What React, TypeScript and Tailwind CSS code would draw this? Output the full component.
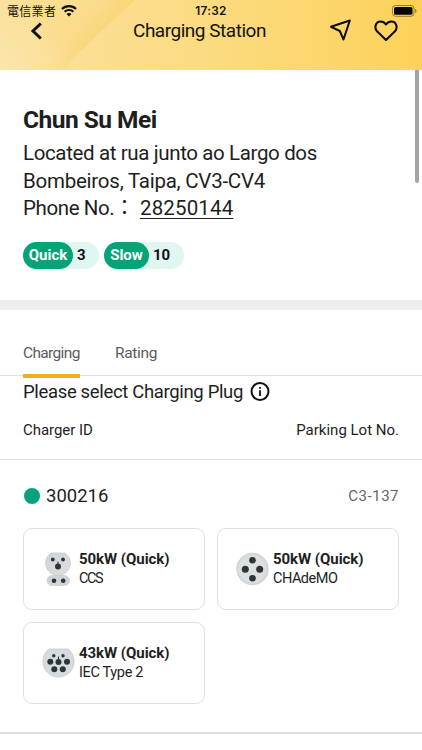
import type { ReactNode } from "react";

type Plug = {
  power: string;
  type: string;
  icon: ReactNode;
  typeClass: string;
};

function CcsIcon() {
  return (
    <svg width="27" height="34" viewBox="0 0 27 34">
      <defs>
        <linearGradient id="ccs" x1="0" y1="0" x2="1" y2="1">
          <stop offset="0" stopColor="#ced2d5" />
          <stop offset="1" stopColor="#dfe1e3" />
        </linearGradient>
      </defs>
      <rect x="2" y="23.5" width="22.5" height="10" rx="5" fill="#d0d4d7" stroke="#c6cacd" strokeWidth=".6" />
      <path d="M6 1H20A12.300 12.300 0 1 1 6 1Z" fill="url(#ccs)" stroke="#c6cacd" strokeWidth=".8" />
      <g fill="#2c3539">
        <circle cx="7.800" cy="7.500" r="1.900" />
        <circle cx="18" cy="7.500" r="1.900" />
        <circle cx="13" cy="14.500" r="3" />
        <path d="M12.500 9.500h1v4h-1z" />
        <circle cx="9" cy="28.700" r="2.300" />
        <circle cx="18.200" cy="28.700" r="2.300" />
      </g>
    </svg>
  );
}

function ChademoIcon() {
  return (
    <svg width="33" height="34" viewBox="0 0 33 34">
      <circle cx="16.500" cy="17" r="15.800" fill="#d8dbdd" stroke="#c6c9cc" strokeWidth=".8" />
      <circle cx="16.500" cy="17" r="13.500" fill="#dddfe1" />
      <g fill="#2c3539">
        <circle cx="16.500" cy="8.300" r="3.300" />
        <circle cx="9.300" cy="17.200" r="3.500" />
        <circle cx="23.700" cy="17.200" r="3.500" />
        <circle cx="16.500" cy="26.300" r="3.300" />
      </g>
    </svg>
  );
}

function Type2Icon() {
  return (
    <svg width="33" height="30" viewBox="0 0 33 30">
      <path d="M7 1H26A15.600 15.600 0 1 1 7 1Z" fill="#d8dbdd" stroke="#c6c9cc" strokeWidth=".8" />
      <g fill="#2c3539">
        <circle cx="11.800" cy="7.700" r="1.700" />
        <circle cx="21" cy="7.700" r="1.700" />
        <circle cx="8.300" cy="13.800" r="3" />
        <circle cx="16.500" cy="14" r="3" />
        <circle cx="25" cy="13.800" r="3" />
        <path d="M16 8.500h1v4h-1z" />
        <circle cx="12.300" cy="21.300" r="3" />
        <circle cx="20.800" cy="21.300" r="3" />
      </g>
    </svg>
  );
}

const plugs: Plug[] = [
  { power: "50kW (Quick)", type: "CCS", icon: <CcsIcon />, typeClass: "tracking-[-1.4px]" },
  { power: "50kW (Quick)", type: "CHAdeMO", icon: <ChademoIcon />, typeClass: "tracking-[-0.5px]" },
  { power: "43kW (Quick)", type: "IEC Type 2", icon: <Type2Icon />, typeClass: "tracking-[-0.35px]" },
];

function Header() {
  return (
    <header className="relative h-[70px] shrink-0 overflow-hidden bg-linear-to-r from-[#fce1a0] via-[#fcdb80] to-[#fdd258] text-[#16130a]">
      <svg className="absolute inset-0" width="422" height="70" viewBox="0 0 422 70">
        <defs>
          <linearGradient id="fold" gradientUnits="userSpaceOnUse" x1="15" y1="-15" x2="100" y2="60">
            <stop offset="0" stopColor="#fbdf98" />
            <stop offset=".65" stopColor="#fbdc8c" />
            <stop offset="1" stopColor="#f9d26f" />
          </linearGradient>
          <linearGradient id="corner" gradientUnits="userSpaceOnUse" x1="0" y1="70" x2="50" y2="20">
            <stop offset="0" stopColor="#fae6ae" />
            <stop offset="1" stopColor="#fae6ae" stopOpacity="0" />
          </linearGradient>
          <linearGradient id="sheen" gradientUnits="userSpaceOnUse" x1="230" y1="80" x2="250" y2="30">
            <stop offset="0" stopColor="#fde08e" stopOpacity="0" />
            <stop offset="1" stopColor="#fbd264" stopOpacity=".35" />
          </linearGradient>
        </defs>
        <path d="M0 0H135Q97 34 62 70H0Z" fill="url(#fold)" />
        <path d="M0 0H135Q97 34 62 70H0Z" fill="url(#corner)" />
        <path d="M225 46Q262 59 290 70H185Z" fill="url(#sheen)" />
      </svg>
      <div className="relative flex h-[22px] items-center justify-between pl-[7px] pr-[5px]">
        <div className="flex w-[150px] items-center gap-[5px] font-['Noto_Sans_CJK_TC',sans-serif] text-[12px] leading-none tracking-[0.3px]">
          電信業者
          <svg width="16" height="12" viewBox="0 0 16 12" fill="#111">
            <path d="M8 0C11.100 0 13.900 1.200 15.800 3.200L14.300 4.800A9 9 0 0 0 1.700 4.800L.2 3.200A11 11 0 0 1 8 0Z" />
            <path d="M8 4C10 4 11.800 4.800 13.100 6L11.600 7.500A5.200 5.200 0 0 0 4.400 7.500L2.900 6A7.200 7.200 0 0 1 8 4Z" />
            <path d="M8 8C9 8 9.800 8.300 10.500 8.900L8 11.500L5.500 8.900A3.600 3.600 0 0 1 8 8Z" />
          </svg>
        </div>
        <span className="relative -left-px pt-px font-[Inter,sans-serif] text-[11.8px] font-semibold leading-none tracking-[0.3px]">17:32</span>
        <div className="flex w-[150px] justify-end">
          <svg width="25" height="12" viewBox="0 0 25 12">
            <rect x=".5" y=".5" width="21.500" height="10.800" rx="3" fill="none" stroke="#77601f" strokeOpacity=".75" />
            <rect x="2" y="2" width="18.500" height="7.800" rx="1.600" fill="#050505" />
            <path d="M23.300 4v4q1.200-.6 1.200-2t-1.200-2Z" fill="#77601f" />
          </svg>
        </div>
      </div>
      <div className="relative -mt-px flex h-[20px] items-center pl-[30px] pr-[24px]">
        <svg width="13" height="18" viewBox="0 0 13 18" fill="none" stroke="#111" strokeWidth="3">
          <path d="M10.800 1.500L3 9L10.800 16.500" />
        </svg>
        <h1 className="ml-[90px] w-[196px] whitespace-nowrap text-[19px] leading-5 tracking-[-0.48px]">Charging Station</h1>
        <svg width="22" height="22" viewBox="0 0 22 22" fill="none" stroke="#0c0b07" strokeWidth="2" strokeLinejoin="round" className="relative -top-px shrink-0">
          <path d="M2 7.800L20.800 1.500L14.500 20.500L10.800 12Z" />
        </svg>
        <svg width="24" height="22" viewBox="0 0 24 22" fill="none" stroke="#0c0b07" strokeWidth="2.100" strokeLinejoin="round" className="ml-[23px] shrink-0">
          <path d="M12 20L3 11.200C0 8 1.500 1.500 6.500 1.500C9 1.500 10.800 2.700 12 4.500C13.200 2.700 15 1.500 17.500 1.500C22.500 1.500 24 8 21 11.200Z" />
        </svg>
      </div>
    </header>
  );
}

function Badge({ label, count, className, labelClass }: { label: string; count: number; className: string; labelClass: string }) {
  return (
    <div className={`flex h-[27px] items-center rounded-full bg-[#e0f6f0] ${className}`}>
      <span className={`flex h-full items-center justify-center rounded-full bg-[#05a377] pt-px text-[15px] font-bold text-white ${labelClass}`}>
        {label}
      </span>
      <span className="ml-[4px] pt-px text-[15px] font-bold text-[#111]">{count}</span>
    </div>
  );
}

function PlugCard({ plug }: { plug: Plug }) {
  return (
    <div className="flex h-[82px] items-center rounded-[9px] border border-[#dfdfdf] pl-[18px]">
      <div className="flex w-[33px] shrink-0 justify-center">{plug.icon}</div>
      <div className="ml-[4px] whitespace-nowrap">
        <div className="text-[15px] font-bold leading-[20px] tracking-[-0.05px]">{plug.power}</div>
        <div className={`text-[14.5px] leading-[20px] ${plug.typeClass}`}>{plug.type}</div>
      </div>
    </div>
  );
}

export default function App() {
  return (
    <div className="flex h-[750px] w-[422px] flex-col overflow-hidden bg-white font-[Roboto,sans-serif] text-[#1e1e1e]">
      <Header />
      <main className="relative flex-1">
        <div className="absolute right-[3px] top-0 h-[113px] w-[4px] rounded-b-full bg-[#a3a3a3]" />
        <section className="h-[230px] px-[23px] pt-[35px]">
          <h2 className="text-[24.5px] font-bold leading-[30px] tracking-[-0.52px]">Chun Su Mei</h2>
          <div className="mt-[5px] whitespace-nowrap text-[20.5px] leading-[27.5px]">
            <p className="tracking-[-0.37px]">Located at rua junto ao Largo dos</p>
            <p className="tracking-[-0.24px]">Bombeiros, Taipa, CV3-CV4</p>
            <p className="flex">
              <span className="w-[117px] tracking-[-0.4px]">
                Phone No.<span className="font-['Noto_Sans_CJK_TC',sans-serif] leading-none">：</span>
              </span>
              <a className="tracking-[0.15px] underline decoration-1 underline-offset-[3px]">28250144</a>
            </p>
          </div>
          <div className="mt-[19px] flex gap-[5px]">
            <Badge label="Quick" count={3} className="w-[76px]" labelClass="w-[50px]" />
            <Badge label="Slow" count={10} className="w-[80px]" labelClass="w-[45px]" />
          </div>
        </section>
        <div className="h-[10px] bg-[#eee]" />
        <nav className="flex h-[66px] items-end gap-[35px] border-b border-[#e2e2e2] px-[23px] text-[15.5px] text-[#5c5c5c]">
          <div className="relative flex h-[44px] w-[57px] whitespace-nowrap leading-[45px] tracking-[-0.65px]">
            Charging
            <span className="absolute -bottom-[3px] left-0 h-[4px] w-[57px] bg-[#f4ae22]" />
          </div>
          <div className="h-[44px] leading-[45px] tracking-[-0.35px]">Rating</div>
        </nav>
        <section className="h-[84px] border-b border-[#dedede] px-[23px] pt-[5px]">
          <div className="flex h-[22px] items-center">
            <span className="w-[226px] whitespace-nowrap pt-px text-[18.5px] tracking-[-0.34px]">Please select Charging Plug</span>
            <svg width="21" height="20" viewBox="0 0 21 20" fill="none" stroke="#111" strokeWidth="2">
              <circle cx="11" cy="9.500" r="8.500" />
              <path d="M11 8.300V14M11 5V6.800" strokeWidth="1.800" />
            </svg>
          </div>
          <div className="mt-[16px] flex h-[22px] items-center justify-between whitespace-nowrap text-[15px]">
            <span className="tracking-[-0.05px]">Charger ID</span>
            <span>Parking Lot No.</span>
          </div>
        </section>
        <section className="h-[274px] border-b-2 border-[#dedede] px-[23px] pt-[25px]">
          <div className="flex h-[22px] items-center">
            <span className="ml-px h-[16px] w-[16px] rounded-full bg-[#05a377]" />
            <span className="ml-[6px] pt-px text-[18.5px]">300216</span>
            <span className="ml-auto pt-px text-[15px] tracking-[0.5px] text-[#666]">C3-137</span>
          </div>
          <div className="mt-[21px] grid grid-cols-[182px_182px] gap-x-[12px] gap-y-[12px]">
            {plugs.map((plug) => (
              <PlugCard key={plug.type} plug={plug} />
            ))}
          </div>
        </section>
      </main>
    </div>
  );
}
